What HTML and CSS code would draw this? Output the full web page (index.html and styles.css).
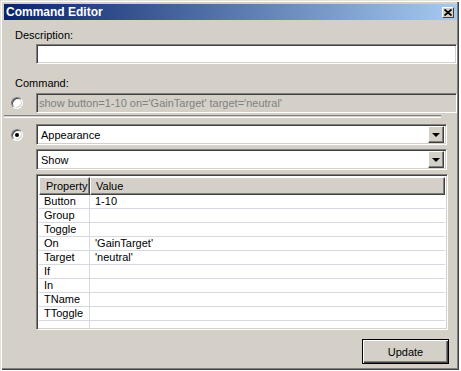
FILE: index.html
```html
<!DOCTYPE html>
<html lang="en">
<head>
    <meta charset="UTF-8">
    <title>Command Editor</title>
    <link rel="stylesheet" href="styles.css">
</head>
<body>
    <div class="dialogWindow">
        <div class="titleBar">
            <span class="titleText">Command Editor</span>
            <span class="closeButton">
                <svg width="8" height="7" viewBox="0 0 8 7">
                    <path d="M0.5 0.5 L7.5 6.5 M7.5 0.5 L0.5 6.5" stroke="#000" stroke-width="1.8" fill="none"/>
                </svg>
            </span>
        </div>

        <div class="dialogBody">
            <div class="fieldLabel">Description:</div>
            <input type="text" class="textInput sunken" id="descriptionInput">

            <div class="fieldLabel commandLabel">Command:</div>
            <div class="radioRow commandRow">
                <span class="radio"></span>
                <div class="textInput sunken disabledBox">show button=1-10 on='GainTarget' target='neutral'</div>
            </div>

            <div class="separator"></div>

            <div class="radioRow builderRow">
                <span class="radio checked"></span>
                <div class="builderStack">
                    <div class="comboBox sunken">
                        <span class="comboText">Appearance</span>
                        <span class="comboArrow raised"><span class="arrowGlyph"></span></span>
                    </div>
                    <div class="comboBox sunken">
                        <span class="comboText">Show</span>
                        <span class="comboArrow raised"><span class="arrowGlyph"></span></span>
                    </div>
                    <div class="tableBox sunken">
                        <table class="propTable">
                            <thead>
                                <tr>
                                    <th class="propCol">Property</th>
                                    <th>Value</th>
                                </tr>
                            </thead>
                            <tbody>
                                <tr><td class="propCol">Button</td><td>1-10</td></tr>
                                <tr><td class="propCol">Group</td><td></td></tr>
                                <tr><td class="propCol">Toggle</td><td></td></tr>
                                <tr><td class="propCol">On</td><td>'GainTarget'</td></tr>
                                <tr><td class="propCol">Target</td><td>'neutral'</td></tr>
                                <tr><td class="propCol">If</td><td></td></tr>
                                <tr><td class="propCol">In</td><td></td></tr>
                                <tr><td class="propCol">TName</td><td></td></tr>
                                <tr><td class="propCol">TToggle</td><td></td></tr>
                                <tr class="fillerRow"><td class="propCol"></td><td></td></tr>
                            </tbody>
                        </table>
                    </div>
                </div>
            </div>

            <div class="dialogActions">
                <button class="pushButton">Update</button>
            </div>
        </div>
    </div>
</body>
</html>
```

FILE: styles.css
```css
body {
    margin: 0;
    background-color: #ffffff;
    font-family: "Liberation Sans", Arial, sans-serif;
    font-size: 11px;
    color: #000000;
}

.dialogWindow {
    width: 459px;
    height: 370px;
    box-sizing: border-box;
    padding: 4px 2px 0 4px;
    background-color: #d4d0c8;
    box-shadow: inset 1px 1px #e4e2dc, inset 2px 2px #ffffff, inset -1px -1px #404040, inset -2px -2px #808080;
}

/* title bar */
.titleBar {
    height: 16px;
    display: flex;
    align-items: center;
    justify-content: space-between;
    background: linear-gradient(to right, #0a246a, #a6caf0);
}

.titleText {
    padding-left: 2px;
    color: #ffffff;
    font-weight: bold;
    font-size: 12px;
}

.closeButton {
    width: 12px;
    height: 11px;
    margin-right: 3px;
    box-sizing: border-box;
    display: flex;
    align-items: center;
    justify-content: center;
    background-color: #d4d0c8;
    border: 1px solid;
    border-color: #ffffff #404040 #404040 #ffffff;
}

/* bevels */
.sunken {
    box-sizing: border-box;
    border: 1px solid;
    border-color: #808080 #ffffff #ffffff #808080;
    box-shadow: inset 1px 1px #404040, inset -1px -1px #d4d0c8;
}

.raised {
    box-sizing: border-box;
    border: 1px solid;
    border-color: #ffffff #404040 #404040 #ffffff;
    box-shadow: inset -1px -1px #808080;
    background-color: #d4d0c8;
}

/* fields */
.fieldLabel {
    line-height: 13px;
    margin-top: 9px;
    margin-left: 11px;
}

.commandLabel {
    margin-top: 13px;
}

.textInput {
    display: block;
    height: 20px;
    padding: 0 2px;
    line-height: 18px;
    font-family: inherit;
    font-size: 11px;
    background-color: #ffffff;
    outline: none;
}

#descriptionInput {
    width: 421px;
    margin: 2px 0 0 32px;
}

.disabledBox {
    flex: 1;
    background-color: #d4d0c8;
    color: #808080;
    white-space: nowrap;
}

.radioRow {
    display: flex;
    align-items: center;
}

.commandRow {
    margin-top: 3px;
}

.builderRow {
    align-items: flex-start;
    margin-top: 6px;
}

.radio {
    width: 12px;
    height: 12px;
    box-sizing: border-box;
    margin: 0 13px 0 7px;
    flex-shrink: 0;
    border-radius: 50%;
    border: 1px solid;
    border-color: #808080 #ffffff #ffffff #808080;
    box-shadow: inset 1px 1px #404040, inset -1px -1px #d4d0c8;
    background-color: #ffffff;
    display: flex;
    align-items: center;
    justify-content: center;
}

.builderRow .radio {
    margin-top: 5px;
}

.radio.checked::after {
    content: "";
    width: 4px;
    height: 4px;
    border-radius: 50%;
    background-color: #000000;
}

.separator {
    height: 1px;
    margin: 2px 16px 0 0;
    border-top: 1px solid #808080;
    border-bottom: 1px solid #ffffff;
}

/* combos and table */
.builderStack {
    flex: 1;
    display: flex;
    flex-direction: column;
    gap: 4px;
}

.comboBox {
    height: 21px;
    margin-right: 10px;
    display: flex;
    align-items: center;
    justify-content: space-between;
    padding: 2px;
    background-color: #ffffff;
}

.comboText {
    padding-left: 2px;
}

.comboArrow {
    width: 16px;
    height: 17px;
    display: flex;
    align-items: center;
    justify-content: center;
}

.arrowGlyph {
    width: 0;
    height: 0;
    border-left: 4px solid transparent;
    border-right: 4px solid transparent;
    border-top: 4px solid #000000;
}

.tableBox {
    height: 156px;
    margin-right: 9px;
    padding: 2px;
    background-color: #ffffff;
}

.propTable {
    width: 100%;
    table-layout: fixed;
    border-collapse: separate;
    border-spacing: 0;
}

.propTable th {
    line-height: 16px;
    padding: 0 0 0 6px;
    text-align: left;
    font-weight: normal;
    background-color: #d4d0c8;
    border: 1px solid;
    border-color: #ffffff #404040 #404040 #ffffff;
    box-shadow: inset -1px -1px #808080;
}

.propTable th + th {
    padding-left: 5px;
}

.propTable .propCol {
    width: 51px;
    box-sizing: border-box;
}

.propTable td {
    line-height: 13px;
    height: 13px;
    padding: 0 0 0 5px;
    border-bottom: 1px solid #d8d8e0;
    white-space: nowrap;
}

.propTable td.propCol {
    border-right: 1px solid #d8d8e0;
}

.fillerRow td {
    height: 8px;
    line-height: 0;
    border-bottom: none;
}

/* buttons */
.dialogActions {
    display: flex;
    justify-content: flex-end;
    margin: 9px 8px 0 0;
}

.pushButton {
    width: 87px;
    height: 25px;
    padding: 0;
    font-family: inherit;
    font-size: 11px;
    color: #000000;
    background-color: #d4d0c8;
    border: 1px solid #000000;
    box-shadow: inset 1px 1px #ffffff, inset -1px -1px #404040, inset -2px -2px #808080;
}
```
